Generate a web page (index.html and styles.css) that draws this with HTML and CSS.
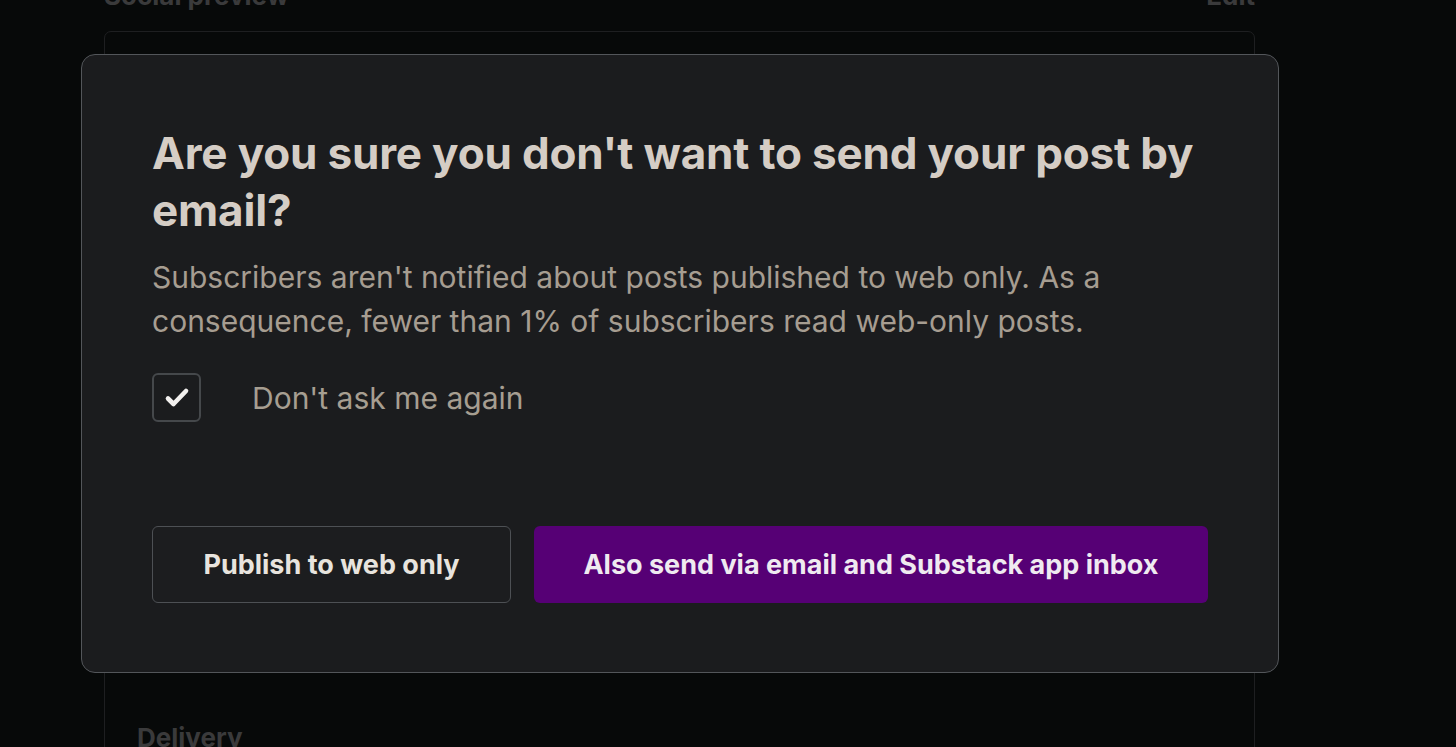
FILE: index.html
```html
<!DOCTYPE html>
<html>
<head>
<meta charset="utf-8">
<link rel="stylesheet" href="styles.css">
</head>
<body>
<div class="page">
  <div class="bg-header">
    <span class="bg-title">Social preview</span>
    <span class="bg-edit">Edit</span>
  </div>
  <div class="bg-card">
    <div class="bg-delivery">Delivery</div>
  </div>
</div>
<div class="modal">
  <h1 class="title">Are you sure you don't want to send your post by email?</h1>
  <p class="desc">Subscribers aren't notified about posts published to web only. As a consequence, fewer than 1% of subscribers read web-only posts.</p>
  <label class="check-row">
    <span class="checkbox">
      <svg width="28" height="24" viewBox="0 0 28 24"><path d="M5 12.5 L10.5 18 L23 5" fill="none" stroke="#f2f0ee" stroke-width="4.6" stroke-linecap="round" stroke-linejoin="round"/></svg>
    </span>
    <span class="check-label">Don't ask me again</span>
  </label>
  <div class="actions">
    <button class="btn btn-secondary">Publish to web only</button>
    <button class="btn btn-primary">Also send via email and Substack app inbox</button>
  </div>
</div>
</body>
</html>
```
FILE: styles.css
```css
html, body {
  margin: 0;
  padding: 0;
  background: #070909;
  width: 1456px;
  height: 747px;
  overflow: hidden;
  font-family: Inter, "Noto Sans", sans-serif;
}
.page {
  height: 747px;
  overflow: hidden;
  padding: 0 201px 0 104px;
}
.bg-header {
  display: flex;
  justify-content: space-between;
  height: 26px;
  margin-top: -17px;
  color: #3a3a3b;
  font-weight: 700;
  font-size: 26px;
  line-height: 26px;
}
.bg-card {
  border: 1px solid #1e1f21;
  border-radius: 7px;
  height: 740px;
  margin-top: 22px;
  padding: 690px 0 0 32px;
  box-sizing: border-box;
}
.bg-delivery {
  color: #3a3a3b;
  font-weight: 700;
  font-size: 26px;
}
.modal {
  position: absolute;
  left: 81px;
  top: 54px;
  width: 1198px;
  height: 619px;
  box-sizing: border-box;
  background: #1b1c1e;
  border: 1.5px solid #53565a;
  border-radius: 14px;
  padding: 70px 70px 0 70px;
}
.title {
  margin: 0;
  font-size: 44px;
  font-weight: 700;
  line-height: 57px;
  letter-spacing: -0.17px;
  color: #d5cdc5;
}
.desc {
  margin: 16px 0 0;
  font-size: 30px;
  line-height: 44px;
  color: #a69d91;
  font-weight: 400;
}
.check-row {
  display: flex;
  align-items: center;
  margin-top: 30px;
}
.checkbox {
  width: 49px;
  height: 49px;
  box-sizing: border-box;
  border: 2px solid #45484b;
  border-radius: 6px;
  display: flex;
  align-items: center;
  justify-content: center;
}
.check-label {
  margin-left: 51px;
  font-size: 30px;
  color: #a69e91;
}
.actions {
  display: flex;
  gap: 23px;
  margin-top: 104px;
}
.btn {
  height: 77px;
  border-radius: 6px;
  font-family: Inter, "Noto Sans", sans-serif;
  font-weight: 700;
  font-size: 27px;
  padding: 0;
}
.btn-secondary {
  width: 359px;
  background: #1c1d1f;
  border: 1.5px solid #4d5054;
  color: #e8e4de;
}
.btn-primary {
  width: 674px;
  background: #560075;
  border: none;
  color: #efeaf0;
}
```
